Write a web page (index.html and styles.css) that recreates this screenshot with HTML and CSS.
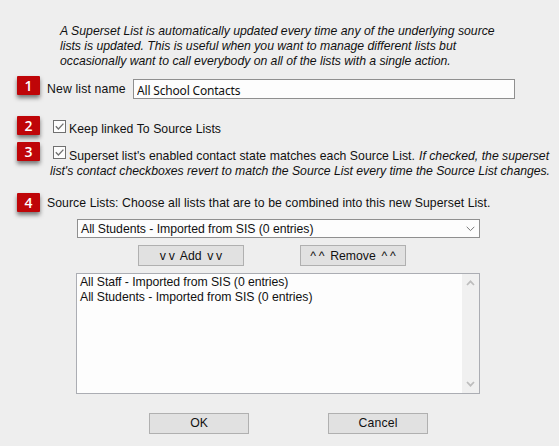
FILE: index.html
```
<!DOCTYPE html>
<html lang="en">
<head>
    <meta charset="UTF-8">
    <meta name="viewport" content="width=device-width, initial-scale=1.0">
    <title>New Superset List</title>
    <link rel="stylesheet" href="styles.css">
</head>
<body>

<form class="dialog">
    <p class="intro">
        <span class="line line-1">A Superset List is automatically updated every time any of the underlying source</span>
        <span class="line line-2">lists is updated. This is useful when you want to manage different lists but</span>
        <span class="line line-3">occasionally want to call everybody on all of the lists with a single action.</span>
    </p>

    <div class="row row-name">
        <span class="step">1</span>
        <label class="name-label" for="listName">New list name</label>
        <input class="name-input" type="text" id="listName" value="All School Contacts">
    </div>

    <div class="row row-linked">
        <span class="step">2</span>
        <label class="check">
            <svg class="box" viewBox="0 0 13 13"><rect x=".5" y=".5" width="12" height="12"/><path d="M2.8 6.3l2.6 2.7 5-5.4"/></svg>
            <span class="linked-text">Keep linked To Source Lists</span>
        </label>
    </div>

    <div class="row row-state">
        <span class="step">3</span>
        <div class="state">
            <label class="check">
                <svg class="box" viewBox="0 0 13 13"><rect x=".5" y=".5" width="12" height="12"/><path d="M2.8 6.3l2.6 2.7 5-5.4"/></svg>
                <span class="state-text">Superset list's enabled contact state matches each Source List.</span>
                <em class="state-note">If checked, the superset</em>
            </label>
            <em class="state-more">list's contact checkboxes revert to match the Source List every time the Source List changes.</em>
        </div>
    </div>

    <div class="row row-sources">
        <span class="step">4</span>
        <span class="sources-text">Source Lists: Choose all lists that are to be combined into this new Superset List.</span>
    </div>

    <div class="picker">
        <div class="select">
            <span class="entry-long">All Students - Imported from SIS (0 entries)</span>
            <svg class="arrow" viewBox="0 0 9 6"><path d="M.7 .8l3.8 3.8 3.8-3.8"/></svg>
        </div>
        <div class="moves">
            <button type="button" class="btn btn-add">v v&nbsp; Add&nbsp; v v</button>
            <button type="button" class="btn btn-remove">^ ^&nbsp; Remove&nbsp; ^ ^</button>
        </div>
        <div class="listbox">
            <ul class="entries">
                <li class="entry-short">All Staff - Imported from SIS (0 entries)</li>
                <li class="entry-long">All Students - Imported from SIS (0 entries)</li>
            </ul>
            <div class="scrollbar">
                <svg class="arrow" viewBox="0 0 9 6"><path d="M1 5l3.5-3.7L8 5"/></svg>
                <svg class="arrow" viewBox="0 0 9 6"><path d="M1 1l3.5 3.7L8 1"/></svg>
            </div>
        </div>
    </div>

    <div class="actions">
        <button type="button" class="btn btn-ok">OK</button>
        <button type="button" class="btn btn-cancel">Cancel</button>
    </div>
</form>

</body>
</html>
```
FILE: styles.css
```
* {
    box-sizing: border-box;
}
body {
    margin: 0;
    background-color: #eeeeee;
    color: #111;
    font: 12.25px/15px "Liberation Sans", Arial, sans-serif;
    white-space: nowrap;
}
.dialog {
    width: 559px;
    height: 446px;
    overflow: hidden;
    padding-top: 24px;
}
.intro {
    margin: 0 0 7px 60px;
    font-style: italic;
}
.line {
    display: block;
}
.line-2,
.line-3 {
    letter-spacing: -0.03px;
}

/* Numbered rows */
.row {
    display: flex;
    align-items: flex-start;
    padding-left: 17px;
}
.step {
    flex: none;
    width: 23px;
    height: 19px;
    margin-right: 7px;
    border-radius: 1px;
    background-color: #bf0508;
    box-shadow: 0 3px 4px rgba(0, 0, 0, 0.5);
    color: #fff;
    font: 600 14px/19px "Open Sans", "Noto Sans", sans-serif;
    text-align: center;
}
.row-name {
    height: 40px;
}
.name-label {
    width: 86px;
    padding-top: 6px;
    letter-spacing: 0.14px;
}
.name-input {
    width: 382px;
    height: 20px;
    margin-top: 3px;
    padding: 2px 0 0 3px;
    border: 1px solid #8f8f8f;
    background-color: #fdfdfd;
    color: #111;
    font: 12px "Noto Sans", sans-serif;
    letter-spacing: -0.18px;
}

/* Checkboxes */
.check {
    display: flex;
}
.box {
    flex: none;
    width: 13px;
    height: 13px;
    margin-right: 3px;
    fill: #fdfdfd;
    stroke: #707070;
}
.box path {
    fill: none;
    stroke-width: 1.3;
}
.row-linked {
    height: 26px;
}
.row-linked .check {
    padding: 4px 0 0 6px;
}
.linked-text {
    padding-top: 2px;
    letter-spacing: 0.04px;
}
.row-state {
    height: 51px;
}
.state {
    padding: 4px 0 0 3px;
}
.state .check {
    padding-left: 3px;
}
.state-text,
.state-note {
    padding-top: 3px;
}
.state-text {
    letter-spacing: 0.04px;
}
.state-note {
    margin-left: 4px;
}
.state-more {
    display: block;
    letter-spacing: -0.03px;
}
.row-sources {
    height: 26px;
}
.sources-text {
    padding-top: 3px;
    letter-spacing: 0.06px;
}

/* Source list picker */
.picker {
    width: 404px;
    margin-left: 76px;
}
.select {
    display: flex;
    justify-content: space-between;
    align-items: center;
    width: 403px;
    height: 19px;
    margin-left: 1px;
    padding: 1px 4px 0 3px;
    border: 1px solid #8f8f8f;
    background-color: #fdfdfd;
}
.entry-long {
    letter-spacing: -0.04px;
}
.entry-short {
    letter-spacing: -0.06px;
}
.arrow {
    width: 9px;
    height: 6px;
    fill: none;
    stroke: #777;
}
.moves {
    display: flex;
    gap: 56px;
    margin: 7px 0 7px 62px;
}
.btn {
    height: 21px;
    padding: 0;
    border: 1px solid #b0b0b0;
    background-color: #e1e1e1;
    color: #111;
    font: inherit;
}
.btn-add,
.btn-remove {
    width: 106px;
    padding-top: 1px;
    word-spacing: -0.6px;
}
.listbox {
    display: flex;
    justify-content: space-between;
    height: 121px;
    border: 1px solid #abadb3;
    background-color: #fdfdfd;
}
.entries {
    margin: 0;
    padding: 1px 0 0 3px;
    list-style: none;
}
.scrollbar {
    display: flex;
    flex-direction: column;
    justify-content: space-between;
    align-items: center;
    width: 17px;
    padding: 6px 0;
    background-color: #f0f0f0;
}
.scrollbar .arrow {
    stroke: #bdbdbd;
    stroke-width: 1.7;
}

.actions {
    display: flex;
    gap: 79px;
    margin: 19px 0 0 149px;
}
.actions .btn {
    width: 100px;
}
.btn-cancel {
    letter-spacing: 0.15px;
}
```
